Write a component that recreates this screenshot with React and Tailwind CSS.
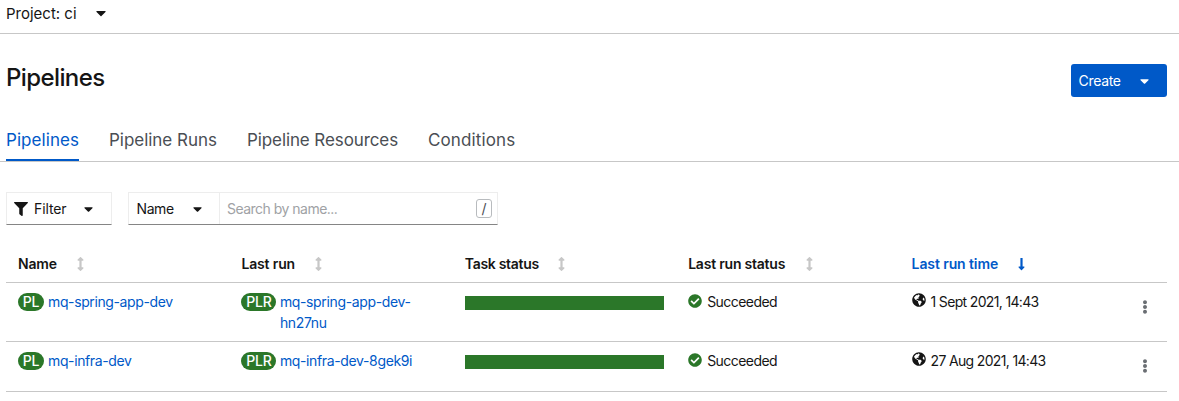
import { FaFilter, FaCaretDown, FaLongArrowAltDown, FaArrowsAltV, FaCheckCircle, FaGlobeAmericas, FaEllipsisV } from "react-icons/fa";

const tabs = [
  { label: "Pipelines", cls: "w-[73px] tracking-[0.06px] text-[#0059c8] border-[#0059c8]" },
  { label: "Pipeline Runs", cls: "w-[108px] tracking-[-0.03px] text-[#4a4e54] border-transparent" },
  { label: "Pipeline Resources", cls: "w-[151px] tracking-[-0.1px] text-[#4a4e54] border-transparent" },
  { label: "Conditions", cls: "w-[88px] tracking-[0.12px] text-[#4a4e54] border-transparent" },
];

const headers = [
  { label: "Name", cls: "w-[38px] tracking-[-0.2px]" },
  { label: "Last run", cls: "w-[53px] tracking-[-0.15px]" },
  { label: "Task status", cls: "w-[73px] tracking-[-0.3px]" },
  { label: "Last run status", cls: "w-[97px] tracking-[-0.22px]" },
  { label: "Last run time", cls: "w-[86px] tracking-[-0.1px]", active: true },
];

const rows = [
  { name: "mq-spring-app-dev", run: ["mq-spring-app-dev-", "hn27nu"], time: "1 Sept 2021, 14:43", height: "h-[59px]" },
  { name: "mq-infra-dev", run: ["mq-infra-dev-8gek9i"], time: "27 Aug 2021, 14:43", height: "h-[50px]" },
];

const grid = "grid grid-cols-[repeat(5,223.4px)_1fr] border-b border-[#c7c7c7]";

function Badge({ children, width }) {
  return (
    <span className={`${width} mt-[2px] flex h-[18px] shrink-0 items-center justify-center rounded-full bg-[#2b7729] text-[14px] leading-none font-medium tracking-[-0.2px] text-white`}>
      {children}
    </span>
  );
}

export default function App() {
  return (
    <div className="h-[401px] overflow-hidden bg-white font-['Inter','Liberation_Sans',sans-serif] text-[14px] leading-[21px] whitespace-nowrap text-[#151515]">
      <div className="flex h-[34px] items-start border-b border-[#c7c7c7] pl-[6px]">
        <span className="mt-[3px] w-[90px] text-[15px]">Project: ci</span>
        <FaCaretDown className="mt-[5px] h-4 w-[10px]" />
      </div>

      <div className="flex h-[89px] items-start justify-between pr-3 pl-[6px] pt-[30px]">
        <h1 className="text-[24px] leading-[28px] font-medium tracking-[-0.6px]">Pipelines</h1>
        <button className="flex h-[33px] w-24 items-center rounded-[3px] bg-[#0059c8] pl-[7.5px] text-white">
          <span className="w-[61px] text-left tracking-[-0.3px]">Create</span>
          <FaCaretDown className="mt-px h-[14px] w-[9px]" />
        </button>
      </div>

      <nav className="flex h-[39px] gap-[30px] border-b border-[#c7c7c7] pl-[6px]">
        {tabs.map((t) => (
          <a key={t.label} className={`${t.cls} h-[38px] border-b-2 pt-1 text-[17px] leading-[26px]`}>{t.label}</a>
        ))}
      </nav>

      <div className="flex h-[63px] pt-[30px] pl-[6px]">
        <button className="flex h-[33px] w-[106px] items-center border border-[#ededed] border-b-[#858585] pl-[7px]">
          <FaFilter className="h-[14px] w-[14px]" />
          <span className="ml-[6px] w-[50px] text-left tracking-[-0.1px]">Filter</span>
          <FaCaretDown className="mt-px h-[14px] w-[9px]" />
        </button>
        <div className="ml-4 flex h-[33px] w-[370px] border border-[#ededed] border-b-[#858585]">
          <button className="flex w-[91px] items-center border-r border-[#ededed] pl-[7.5px]">
            <span className="w-[56px] text-left tracking-[-0.4px]">Name</span>
            <FaCaretDown className="mt-px h-[14px] w-[9px]" />
          </button>
          <div className="flex flex-1 items-center justify-between pr-[5px] pl-[7px]">
            <span className="tracking-[-0.52px] text-[#a0a2a5]">Search by name...</span>
            <kbd className="flex h-[19px] w-4 items-center justify-center rounded-[3px] border border-[#b8bbbe] font-['Inter',sans-serif] text-[14px] leading-none text-[#4a4e54]">/</kbd>
          </div>
        </div>
      </div>

      <div className="mr-3 ml-[6px]">
        <div className={`${grid} h-[58px] pt-[28px] font-semibold`}>
          {headers.map((h) => (
            <div key={h.label} className={`flex items-start pl-3 ${h.active ? "text-[#0059c8]" : ""}`}>
              <span className={h.cls}>{h.label}</span>
              {h.active ? <FaLongArrowAltDown className="ml-[20px] mt-[4px] h-[14px] w-[7px]" /> : <FaArrowsAltV className="ml-[20.5px] mt-[4px] h-[14px] w-[7px] text-[#c7c7c7]" />}
            </div>
          ))}
        </div>
        {rows.map((r) => (
          <div key={r.name} className={`${grid} ${r.height} pt-[8px]`}>
            <div className="flex items-start pl-3">
              <Badge width="w-[26px]">PL</Badge>
              <a className="ml-1 tracking-[-0.38px] text-[#0059c8]">{r.name}</a>
            </div>
            <div className="flex items-start pl-3">
              <Badge width="w-[35px]">PLR</Badge>
              <a className="ml-[3.5px] tracking-[-0.36px] text-[#0059c8]">
                {r.run.map((part) => <span key={part} className="block">{part}</span>)}
              </a>
            </div>
            <div className="pt-[5px] pl-3">
              <div className="h-[14px] w-[199px] bg-[#2b7729]" />
            </div>
            <div className="flex items-start pl-3">
              <FaCheckCircle className="mt-[3px] h-[14px] w-[14px] text-[#2b7729]" />
              <span className="ml-[5px] tracking-[-0.55px]">Succeeded</span>
            </div>
            <div className="flex items-start pl-3">
              <FaGlobeAmericas className="mt-[2px] h-[14px] w-[14px]" />
              <span className="ml-[5px] tracking-[-0.66px]">{r.time}</span>
            </div>
            <div className="flex justify-center">
              <FaEllipsisV className="mt-[9px] h-[14px] w-[6px] text-[#6a6e73]" />
            </div>
          </div>
        ))}
      </div>
    </div>
  );
}
